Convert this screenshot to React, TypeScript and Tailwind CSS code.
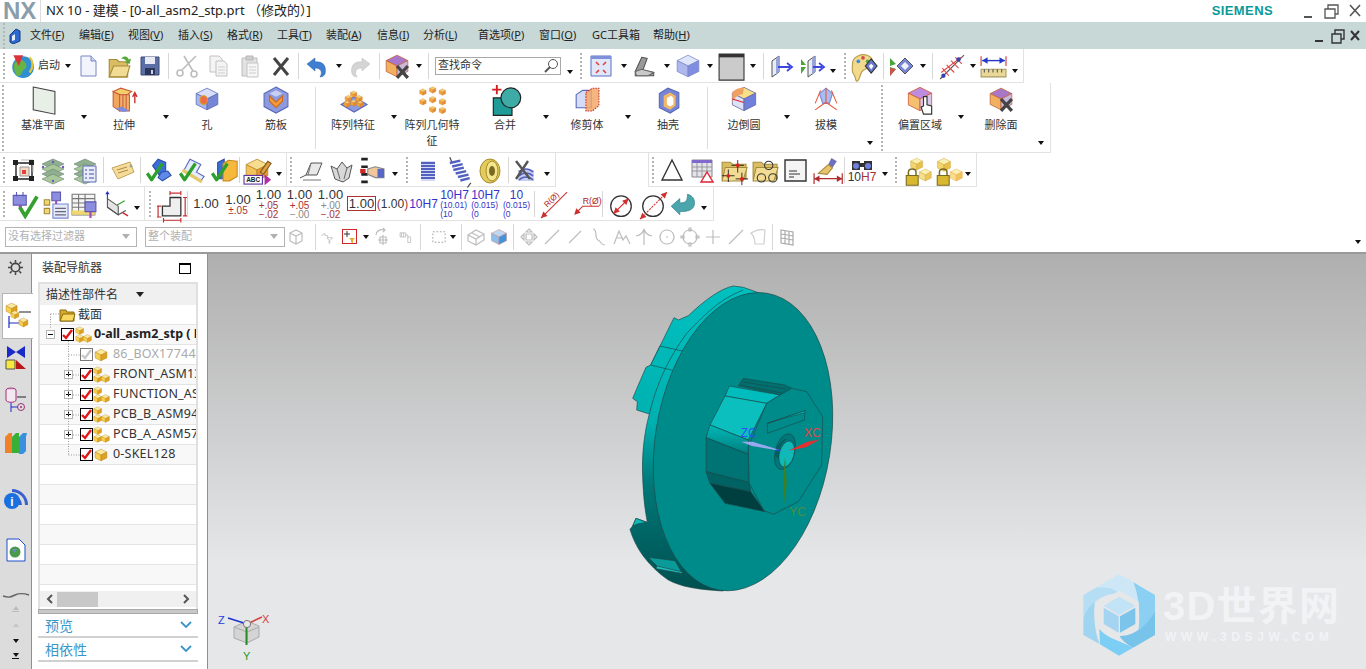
import React from "react";

const V = ({ s = 24, children }: { s?: number; children: React.ReactNode }) => (
  <svg width={s} height={s} viewBox="0 0 24 24" className="block shrink-0 overflow-visible">{children}</svg>
);
const CubeG = ({ t, l, r, k = "#555" }: { t: string; l: string; r: string; k?: string }) => (
  <g stroke={k} strokeWidth=".7" strokeLinejoin="round">
    <path d="M12 2l10 5-10 5L2 7z" fill={t} />
    <path d="M2 7l10 5v10L2 17z" fill={l} />
    <path d="M22 7l-10 5v10l10-5z" fill={r} />
  </g>
);
const Chk = () => <path d="M3 15l4 6 10-15" fill="none" stroke="#2ca02c" strokeWidth="3" strokeLinejoin="round" />;
const XMark = ({ c = "#444", w = 3 }: { c?: string; w?: number }) => <path d="M12 12l10 11M22 12L12 23" stroke={c} strokeWidth={w} />;

const Drop = () => <div className="w-0 h-0 border-x-[3.5px] border-x-transparent border-t-[4px] border-t-[#111]" />;
const S = ({ c, children }: { c: string; children?: React.ReactNode }) => (
  <div className={`${c} shrink-0 h-full flex items-center justify-center`}>{children}</div>
);
const Sep = ({ c }: { c: string }) => (
  <div className={`${c} shrink-0 h-full flex items-center justify-center`}><div className="w-px h-[26px] bg-[#d6d6d6]" /></div>
);
const Grip = ({ c = "w-[8px]" }: { c?: string }) => (
  <div className={`${c} shrink-0 h-full flex items-center justify-center`}>
    <div className="w-[2px] h-[26px] border-l-2 border-dotted border-[#b4b4b4]" />
  </div>
);

const Globe = () => (
  <V s={26}>
    <circle cx="13" cy="13" r="10" fill="#2f8fd0" />
    <path d="M6 8c4-3 9-1 10 3s-3 3-4 7-5 4-6 1-3-8 0-11z" fill="#66b544" />
    <path d="M19 4c3 3 4 9 0 14" stroke="#e2c23c" strokeWidth="2" fill="none" />
    <path d="M4 2h9l-4 10z" fill="#d9333c" />
  </V>
);
const Doc = () => (
  <V><path d="M5 2h10l5 5v15H5z" fill="#f2f4fb" stroke="#7b86c4" /><path d="M15 2v5h5" fill="#cdd3ee" stroke="#7b86c4" /></V>
);
const Folder = () => (
  <V s={26}>
    <path d="M3 6h7l2 2h8v14H3z" fill="#d9bd62" stroke="#a58a3a" />
    <path d="M3 22l4-10h15l-3 10z" fill="#f2dc94" stroke="#a58a3a" />
    <path d="M14 5c3-3 6-2 7 1l2-1-1 5-5-1 2-1c-1-2-3-3-5-3z" fill="#58a83c" />
  </V>
);
const Save = () => (
  <V><path d="M3 3h18v18H3z" fill="#5a6fa5" stroke="#3d4a75" /><path d="M7 3h10v7H7z" fill="#e8ebf5" /><path d="M7 14h10v7H7z" fill="#2b3557" /><path d="M13 16h2v4h-2z" fill="#cdd3ee" /></V>
);
const Sciss = () => (
  <V><g stroke="#bdbdbd" strokeWidth="1.6" fill="none"><path d="M21 2L7 16M9 2l9 15" /><circle cx="5" cy="19" r="3" /><circle cx="19" cy="20" r="3" /></g></V>
);
const Copy = () => (
  <V><g fill="#f4f4f4" stroke="#c2c2c2"><path d="M4 2h9l3 3v13H4z" /><path d="M10 7h8l3 3v12H10z" /></g><path d="M12 13h7M12 16h7M12 19h7" stroke="#cfcfcf" /></V>
);
const Paste = () => (
  <V><path d="M4 4h15v18H4z" fill="#e2e2e2" stroke="#bcbcbc" /><path d="M8 2h7v4H8z" fill="#cfcfcf" stroke="#b5b5b5" /><path d="M9 9h11v14H9z" fill="#f6f6f6" stroke="#c4c4c4" /><path d="M11 13h7M11 16h7M11 19h7" stroke="#cfcfcf" /></V>
);
const XI = () => <V><path d="M5 4l14 17M19 4L5 21" stroke="#444" strokeWidth="3" /></V>;
const Undo = ({ c = "#3f7fd1" }: { c?: string }) => (
  <V><path d="M2 10l8-6v4c7-1 12 3 10 12-1 2-3 3-5 3 3-5 1-9-5-9v3z" fill={c} stroke={c === "#3f7fd1" ? "#2a5ea8" : "#bdbdbd"} strokeWidth=".5" /></V>
);
const Redo = () => <div className="-scale-x-100"><Undo c="#d4d4d4" /></div>;
const CubeX = () => <V s={26}><CubeG t="#a877c9" l="#f0b060" r="#c9b8dc" k="#c0603a" /><XMark /></V>;
const Fit = () => (
  <V><path d="M2 2h20v20H2z" fill="#dfe7f8" stroke="#5b70c4" /><path d="M2 2h20v3H2z" fill="#7f8fd9" /><path d="M7 8l3 3M17 8l-3 3M7 19l3-3M17 19l-3-3" stroke="#e04040" strokeWidth="1.6" /></V>
);
const Iron = () => (
  <V s={26}><path d="M9 4l5 1-4 11 10 2v3H3v-4z" fill="#9a9a9a" stroke="#555" /><path d="M3 17l6-2 11 3-5 3H4z" fill="#c9c9c9" stroke="#666" /></V>
);
const BlueCube = () => <V s={26}><CubeG t="#dfe5fa" l="#aeb8ee" r="#7f8de0" k="#7c88c8" /></V>;
const GrayRect = () => <V s={26}><path d="M1 1h23v24H1z" fill="#cbcbcb" stroke="#333" /><path d="M1 1h23v3H1z" fill="#333" /></V>;
const PlaneA = ({ two }: { two?: boolean }) => (
  <V>
    {two && <path d="M0 5l5 6-5 0zM0 13h5l-5 7z" fill="#4ca33c" />}
    <path d={two ? "M7 7l7-5v16l-7 5z" : "M2 7l7-5v16l-7 5z"} fill="#e8ecf8" stroke="#555" />
    <path d={two ? "M11 5l3-3v16l-3 3z" : "M6 5l3-3v16l-3 3z"} fill="#9aa3d8" />
    <path d={two ? "M12 13h9M18 9l5 4-5 4" : "M8 13h12M17 9l5 4-5 4"} stroke="#3b46e0" strokeWidth="1.8" fill="none" />
  </V>
);
const Palette = () => (
  <V s={28}>
    <path d="M3 10c0-6 8-9 13-7s6 8 2 10-5 1-7 4-2 8-4 8-1-4-3-6-1-5-1-9z" fill="#f1d98e" stroke="#b99d4a" />
    <circle cx="8" cy="8" r="1.6" fill="#3a8de0" /><circle cx="12" cy="5" r="1.6" fill="#d94a4a" /><circle cx="16" cy="8" r="1.6" fill="#55a83a" />
    <path d="M14 12l5-6 5 6-5 6z" fill="#6a79d0" stroke="#333" /><path d="M17 12l2-2 2 2-2 3z" fill="#fff" />
  </V>
);
const Diamond = () => (
  <V>
    <path d="M0 4l6 6-6 2zM0 13l6 2-6 7z" fill="#4ca33c" /><path d="M0 14l6 1-6 7z" fill="#c9564a" />
    <path d="M7 12l8-8 8 8-8 8z" fill="#7785d5" stroke="#555" /><path d="M11 12l4-4 4 4-4 4z" fill="#eef0fb" />
  </V>
);
const Hatch = () => (
  <V s={26}>
    <path d="M2 24L24 2" stroke="#555" /><path d="M4 14l6 7M8 11l7 7M12 7l7 7M16 4l6 6M3 18l18-14" stroke="#e04545" strokeWidth="1" />
    <circle cx="5" cy="21" r="2" fill="#3344b0" /><circle cx="19" cy="6" r="2" fill="#3344b0" />
  </V>
);
const RulerI = () => (
  <V s={26}>
    <path d="M1 3v9M24 3v9" stroke="#c33" /><path d="M2 7h21" stroke="#2438c8" strokeWidth="1.3" /><path d="M2 7l5-3v6zM23 7l-5-3v6z" fill="#2438c8" />
    <path d="M1 15h23v7H1z" fill="#e9d898" stroke="#a79a60" /><path d="M4 15v3M8 15v3M12 15v3M16 15v3M20 15v3" stroke="#555" />
  </V>
);
const Plane = () => <V s={26}><path d="M3 1l20 4v21L3 22z" fill="#e8efe6" stroke="#444" /></V>;
const Extrude = () => (
  <V s={26}>
    <path d="M2 5l7-3 10 3-4 3-10 0z" fill="#f4d06c" stroke="#c95c38" /><path d="M2 5l6 3v15l-6-4z" fill="#f2a55c" stroke="#c95c38" /><path d="M8 8h9v15l-9 0z" fill="#f0b46e" stroke="#c95c38" /><path d="M11 8v15M14 8v15" stroke="#c95c38" /><path d="M4 21l6-2 7 4-6 1z" fill="#7c8de0" />
    <path d="M22 16V7M20 10l2-4 2 4" stroke="#c33" strokeWidth="1.3" fill="none" />
  </V>
);
const Hole = () => <V s={26}><CubeG t="#d8def8" l="#aab6ee" r="#7785d5" k="#5a68b8" /><ellipse cx="9" cy="13" rx="3.5" ry="4" fill="#f06a4a" stroke="#d4a020" /></V>;
const Rib = () => (
  <V s={26}><path d="M12 1l11 6v12l-11 6L1 19V7z" fill="#8d9ae0" stroke="#5a68b8" /><path d="M6 9l6 6 6-6v5l-6 6-6-6z" fill="#f49a3a" stroke="#c96a20" /><path d="M12 4l6 3-6 3-6-3z" fill="#c7cff2" /></V>
);
const SmallBox = ({ x, y, c = "#f2a53a" }: { x: number; y: number; c?: string }) => (
  <g transform={`translate(${x} ${y}) scale(.3)`}><CubeG t="#f7cc6c" l={c} r="#e88e2e" k="#c96a20" /></g>
);
const PatF = () => (
  <V s={26}><path d="M1 17l12-7 12 7-12 7z" fill="#8d9ae0" stroke="#5a68b8" /><SmallBox x={9} y={4} /><SmallBox x={4} y={8} /><SmallBox x={14} y={8} /><SmallBox x={9} y={12} /><SmallBox x={15} y={13} /><SmallBox x={3} y={13} /></V>
);
const PatG = () => (
  <V s={26}><SmallBox x={0} y={2} /><SmallBox x={9} y={0} /><SmallBox x={18} y={2} /><SmallBox x={0} y={11} /><SmallBox x={9} y={9} /><SmallBox x={18} y={11} /><SmallBox x={9} y={18} /><SmallBox x={18} y={19} /></V>
);
const Unite = () => (
  <V s={28}><path d="M2 11h16v15H2z" fill="#1f9c98" stroke="#222" /><circle cx="17" cy="11" r="8.5" fill="#3eaba6" stroke="#222" /><path d="M1 4h8M5 0v8" stroke="#d02020" strokeWidth="1.6" /></V>
);
const Trim = () => (
  <V s={26}><path d="M2 8l6-4h8v16H2z" fill="#d6dcf8" stroke="#5a68b8" /><path d="M11 6l6-4h6v16l-6 5h-6z" fill="#f2a868" fillOpacity=".85" stroke="#c33" strokeDasharray="1.5 1" /></V>
);
const Shell = () => (
  <V s={26}><path d="M4 7l8-5 10 4v14l-8 5-10-5z" fill="#7785d5" stroke="#5a68b8" /><path d="M8 9l6-3 5 3v9l-5 4-6-3z" fill="#f0b868" /><path d="M11 11l4-2 2 2v6l-3 2-3-2z" fill="#fff" /></V>
);
const Blend = () => (
  <V s={28}><CubeG t="#f6e08a" l="#dce3f8" r="#6f7fdc" k="#6a6a9a" /><path d="M2 7c0-3 8-5 10-5l-1 6c-3 0-7 2-9 7z" fill="#f0a060" /><path d="M2 12l10 3" stroke="#d23" /></V>
);
const Draft = () => (
  <V s={26}><path d="M12 2l6 5-3 9H9L6 7z" fill="#a9bdf0" stroke="#7785d5" /><path d="M12 2v13M12 15L2 22M12 15l10 7M7 4L2 16M17 4l5 12" stroke="#e8583a" fill="none" /></V>
);
const Offset = () => (
  <V s={28}><CubeG t="#bd8be0" l="#f4c070" r="#d9c8ea" k="#d05a38" /><path d="M15 10v8l-2 1 2 6h7v-7l-4-1v-7z" fill="#fff" stroke="#333" /></V>
);
const AsmNet = () => (
  <V s={24}><path d="M5 5h16v16H5z" fill="none" stroke="#222" strokeWidth="1.4" /><path d="M10 2h12v12" fill="none" stroke="#bbb" /><path d="M9 9h9v9H9z" fill="#f6d8c4" stroke="#999" /><path d="M11 12h4v4h-4z" fill="#e04040" /><g fill="#222"><rect x="2" y="2" width="5" height="5" /><rect x="18" y="2" width="5" height="5" /><rect x="2" y="18" width="5" height="5" /><rect x="18" y="18" width="5" height="5" /></g></V>
);
const Layer = ({ list }: { list?: boolean }) => (
  <V s={24}>
    {[2, 7, 12, 17].map((y, i) => (
      <path key={y} d={`M1 ${y + 4}l11-5 11 5-11 5z`} fill={i % 2 ? "#a8c89a" : "#8fb090"} stroke="#6a8070" strokeWidth=".6" />
    ))}
    {list && <g><path d="M10 8h13v16H10z" fill="#e8ecfa" stroke="#5a68b8" /><path d="M12 12h2M16 12h5M12 16h2M16 16h5M12 20h2M16 20h5" stroke="#4050a0" /></g>}
    {!list && <g fill="#6a5ac0"><circle cx="12" cy="4" r="1.2" /><circle cx="2" cy="9" r="1.2" /><circle cx="22" cy="9" r="1.2" /><circle cx="12" cy="23" r="1.2" /></g>}
  </V>
);
const Tag = () => (
  <V s={24}><path d="M2 10l18-6 4 10-16 7z" fill="#f5dc9a" stroke="#c2a55c" /><path d="M7 12l10-3M8 15l10-3" stroke="#b08a40" /><circle cx="21" cy="8" r="1" fill="#fff" stroke="#888" /></V>
);
const BluA = () => (
  <V s={26}><path d="M8 8l5-6 7 3v11l-5 2z" fill="#3b6ed8" stroke="#2a4ea8" /><path d="M16 14l6-1 3 4-8 5-4-3z" fill="#5f8ae8" stroke="#2a4ea8" /><Chk /></V>
);
const YelA = () => (
  <V s={26}><path d="M12 2l10 5-4 7 7 4-3 4-16-9z" fill="#e6ecfb" stroke="#5a68b8" /><path d="M5 12l18 11" stroke="#e4c96c" strokeWidth="3" /><Chk /></V>
);
const BluY = () => (
  <V s={26}><path d="M8 5l6-3v18H8z" fill="#3b6ed8" stroke="#2a4ea8" /><path d="M13 6l5-3 8 1v14l-7 4h-6z" fill="#f6b93b" stroke="#c98a20" /><Chk /></V>
);
const AbcI = () => (
  <V s={26}>
    <CubeG t="#f7dd90" l="#f2c35c" r="#e89a38" k="#b88020" />
    <path d="M15 14l7-10 3 2-7 10z" fill="#e2a040" stroke="#7a5a20" />
    <rect x="0" y="17" width="17" height="8" fill="#fff" stroke="#5a2ca0" />
    <text x="8.5" y="23.500" textAnchor="middle" fontSize="6" fontWeight="700" fill="#222" fontFamily="Liberation Sans">ABC</text>
    <path d="M19 16l6 5-6 5z" fill="#b030a0" />
  </V>
);
const Surf = () => (
  <V s={24}><path d="M1 20l6-3 5-12h11l-5 12H7" fill="#e8e8e8" stroke="#555" /><path d="M12 5l-3 12M4 22h18" stroke="#777" /></V>
);
const Surf2 = () => <V s={24}><path d="M2 8l6 3 5-7 5 6 5-3-3 13-6 4-8-3z" fill="#d8d8d8" stroke="#555" /><path d="M8 11l3 10M18 10l-3 11" stroke="#666" /></V>;
const Points = () => (
  <V s={26}><path d="M3 2h6M3 9h6M3 16h6M3 23h6" stroke="#222" strokeWidth="2.4" /><rect x="2" y="11" width="5" height="4" fill="#d02828" /><path d="M9 11l7-2 8 2v8h-8l-7-3z" fill="#f0c89c" stroke="#888" /><path d="M18 11h6v8h-6z" fill="#5866c8" /></V>
);
const Coil = () => (
  <V s={24}><path d="M5 3h14v20H5z" fill="#d6daf5" /><path d="M5 5h14M5 8h14M5 11h14M5 14h14M5 17h14M5 20h14" stroke="#5260c0" strokeWidth="1.8" /></V>
);
const Spring = () => (
  <V s={28}><path d="M5 1l2 5M20 27l3-4" stroke="#444" /><path d="M5 6l9-2M7 9l9-2M8 12l9-2M10 15l9-2M12 18l9-2M14 21l8-2" stroke="#5260c0" strokeWidth="2" /></V>
);
const Disc = () => (
  <V s={24}><ellipse cx="13" cy="13" rx="10" ry="12" fill="#e4cc5c" stroke="#a58a2a" /><ellipse cx="15" cy="13" rx="6" ry="10" fill="#f4e48c" stroke="#a58a2a" /><ellipse cx="15" cy="13" rx="3" ry="5" fill="#7a6a20" /></V>
);
const CoilX = () => (
  <V s={24}><path d="M6 12h16v11H6z" fill="#c8cef0" /><path d="M7 14c4-4 10-4 14 0M7 18c4-4 10-4 14 0M7 22c4-4 10-4 14 0" stroke="#5260c0" strokeWidth="1.6" fill="none" /><path d="M4 3l14 18M16 3L4 21" stroke="#555" strokeWidth="2.4" /></V>
);
const Tri = () => <V s={24}><path d="M12 2l10 20H2z" fill="none" stroke="#333" strokeWidth="1.4" /></V>;
const Table = () => (
  <V s={24}><path d="M2 2h20v17H2z" fill="#e4e4ec" stroke="#888" /><path d="M2 2h20v3H2z" fill="#8068cc" /><path d="M2 9h20M2 13h20M7 5v14M12 5v14M17 5v14" stroke="#999" /><path d="M17 14l6 10H11z" fill="#fff" stroke="#d23" strokeWidth="1.4" /></V>
);
const FolderPt = ({ rings }: { rings?: boolean }) => (
  <V s={25}>
    <path d="M2 5h8l2 2h13v14H2z" fill="#d9bd62" stroke="#a58a3a" /><path d="M2 23l3-13h21l-4 13z" fill="#f2dc94" stroke="#a58a3a" />
    {rings ? <g fill="none" stroke="#333"><circle cx="17" cy="8" r="4" /><circle cx="10" cy="20" r="4" /><circle cx="21" cy="20" r="4" /></g> :
      <g stroke="#111" fill="#e02020"><path d="M17 3v12M11 8h12M8 12v12M2 18h12M21 15v12M15 21h12" strokeWidth=".8" /><circle cx="17" cy="8" r="1.8" stroke="none" /><circle cx="8" cy="18" r="1.8" stroke="none" /><circle cx="21" cy="21" r="1.8" stroke="none" /></g>}
  </V>
);
const Note = () => (
  <V s={24}><path d="M2 2h21v21H2z" fill="#f4f4f4" stroke="#333" strokeWidth="1.4" /><path d="M6 13h8M6 16h11M6 19h5" stroke="#333" strokeWidth="1.1" /></V>
);
const Brush = () => (
  <V s={26}><path d="M17 1l5 3-4 6-4-3z" fill="#6f6fc0" /><path d="M14 7l4 3-5 6-8-1z" fill="#e8c46c" stroke="#a58a3a" /><path d="M1 15v10M27 15v10M1 20h26" stroke="#b02c2c" strokeWidth="1.1" /><path d="M1 20l5-3v6zM27 20l-5-3v6z" fill="#b02c2c" /></V>
);
const Lock = ({ shift }: { shift?: boolean }) => (
  <V s={26}>
    <g transform={shift ? "translate(2 0) scale(.6)" : "translate(6 0) scale(.55)"}><CubeG t="#faf0b0" l="#f3d56c" r="#e8c04c" k="#c8a030" /></g>
    <g transform="translate(14 10) scale(.55)"><CubeG t="#faf0b0" l="#f6e08c" r="#eec65c" k={shift ? "#f0963a" : "#c8a030"} /></g>
    <path d="M3 17h11v9H3z" fill="#d9b830" stroke="#7a6a20" /><path d="M5 17v-3c0-4 7-4 7 0v3" fill="none" stroke="#7a6a20" strokeWidth="1.4" />
  </V>
);
const PlugChk = () => (
  <V s={26}><path d="M6 1v4M12 1v4M3 4h12v9H3z" fill="#8d8de0" stroke="#5a5ab0" /><path d="M8 13h3v3H8z" fill="#a04ac0" /><path d="M9 15l5 8L25 5" fill="none" stroke="#35a02e" strokeWidth="3.4" /></V>
);
const PlugTree = () => (
  <V s={26}><path d="M3 8h5v5H3zM3 16h5v5H3z" fill="#f0d870" stroke="#a58a3a" /><path d="M11 12h14v13H11z" fill="#e4e8f8" stroke="#7785d5" /><path d="M13 16h10M13 19h10M13 22h10" stroke="#667" /><path d="M10 1h8v8h-8z" fill="#8d8de0" stroke="#5a5ab0" /><path d="M13 9h2v3h-2z" fill="#a04ac0" /></V>
);
const PlugTable = () => (
  <V s={26}><path d="M1 3h21v19H1z" fill="#f4f4f4" stroke="#777" /><path d="M1 7h21M1 11h21M1 15h21M7 3v19M13 3v19" stroke="#777" /><path d="M1 18h21v4H1z" fill="#f0d870" /><path d="M13 10h10v9H13z" fill="#8d8de0" stroke="#5a5ab0" /><path d="M17 19h2v6h-2z" fill="#a04ac0" /></V>
);
const Wcs = () => (
  <V s={26}><path d="M5 7l10 7v8L5 15z" fill="#e4e4e4" stroke="#555" /><path d="M5 15l10 7 7-4" fill="none" stroke="#555" /><path d="M5 7V1" stroke="#2230d0" /><path d="M3 3l2-3 2 3z" fill="#2230d0" /><path d="M14 13l7-4" stroke="#2c9a2c" /><path d="M19 20l5 3" stroke="#d02c2c" strokeWidth="1.4" /></V>
);
const Dim = () => (
  <V s={26}><path d="M5 23V14h7V6h10v17z" fill="#efefef" stroke="#333" strokeWidth="1.2" /><path d="M1 14v10M4 14H0M4 24H0M12 2h10M12 0v4M22 0v4M26 6v17M24 6h4M24 23h4M6 27h16M6 25v4M22 25v4" stroke="#c83030" strokeWidth="1.1" fill="none" /></V>
);
const RDim = ({ long }: { long?: boolean }) => (
  <V s={26}>
    {long ? <path d="M1 25L25 1" stroke="#c83030" /> : <path d="M3 21l7-7h15" stroke="#c83030" fill="none" />}
    <path d={long ? "M1 25l2-6 4 4z" : "M2 22l2-6 4 4z"} fill="#c83030" />
    <text x={long ? 6 : 10} y={long ? 14 : 12} fontSize={long ? 7.5 : 8} fill="#b02020" transform={long ? "rotate(-45 8 14)" : undefined} fontFamily="Liberation Sans">R(Ø)</text>
  </V>
);
const DiaDim = ({ out }: { out?: boolean }) => (
  <V s={26}>
    <circle cx="12" cy="14" r="9.5" fill="none" stroke="#333" strokeWidth="1.2" />
    {out ? <path d="M0 26L25 1" stroke="#d23030" strokeDasharray="2 1" /> : <path d="M5 21L19 7" stroke="#d23030" />}
    <path d={out ? "M0 26l2-6 4 4zM25 1l-2 6-4-4z" : "M5 21l2-6 4 4zM19 7l-2 6-4-4z"} fill="#d23030" />
  </V>
);
const Back = () => (
  <V s={26}><path d="M2 14l8-7v4c6 0 7-2 7-8 5 1 8 6 6 11-2 4-6 5-13 5v3z" fill="#4aa5ac" stroke="#2d7e86" strokeWidth=".6" /></V>
);
const Mini = ({ d, c = "#bdbdbd" }: { d: string; c?: string }) => (
  <svg width="20" height="20" viewBox="0 0 20 20" className="block"><path d={d} fill="none" stroke={c} strokeWidth="1.2" /></svg>
);
const Dim2 = ({ a, b }: { a: string; b?: string }) => (
  <div className="flex flex-col items-center font-['Liberation_Sans',sans-serif]">
    <span className="text-[13px] leading-[13px] text-[#333]">1.00</span>
    <span className="text-[10px] leading-[9px] text-[#a33]">{a}</span>
    {b && <span className="text-[10px] leading-[9px] text-[#a33]">{b}</span>}
  </div>
);
const Dim3 = ({ a, b, d }: { a: string; b: string; d?: boolean }) => (
  <div className="flex flex-col items-center font-['Liberation_Sans',sans-serif]">
    <span className="text-[13px] leading-[13px] text-[#333]">1.00</span>
    <span className={`text-[10px] leading-[9px] ${d ? "text-[#888]" : "text-[#a33]"}`}>{a}</span>
    <span className={`text-[10px] leading-[9px] ${d ? "text-[#a33]" : "text-[#888]"}`}>{b}</span>
  </div>
);
const Fit3 = ({ a, b, c }: { a: string; b: string; c: string }) => (
  <div className="flex flex-col items-center text-[#3434c8] font-['Liberation_Sans',sans-serif]">
    <span className="text-[12px] leading-[12px]">{a}</span>
    <span className="text-[8.5px] leading-[9px] self-start">{b}</span>
    <span className="text-[8.5px] leading-[8px] self-start">{c}</span>
  </div>
);

const RB = ({ c, icon, t }: { c: string; icon: React.ReactNode; t: string }) => (
  <div className={`${c} shrink-0 h-full flex flex-col items-center text-[11px] leading-[16px] text-[#333] text-center pt-[2px]`}>
    <div className="h-[28px] flex items-center justify-center">{icon}</div>
    <div className="mt-[4px]">{t}</div>
  </div>
);
const RDrop = ({ c }: { c: string }) => (
  <div className={`${c} shrink-0 h-full flex justify-center pt-[32px]`}><Drop /></div>
);
const Corner = ({ c }: { c: string }) => (
  <div className={`${c} shrink-0 h-full flex justify-end items-end pb-[7px] pr-[5px]`}><Drop /></div>
);
const RSep = ({ c }: { c: string }) => (
  <div className={`${c} shrink-0 h-full flex justify-center items-center`}><div className="w-px h-[62px] bg-[#dcdcdc]" /></div>
);

const Check = ({ off }: { off?: boolean }) => (
  <div className={`w-[13px] h-[13px] border bg-white shrink-0 flex items-center justify-center ${off ? "border-[#777]" : "border-black"}`}>
    <svg width="11" height="11" viewBox="0 0 11 11"><path d="M1 6l3 3 6-8" fill="none" stroke={off ? "#c8c8c8" : "#e01818"} strokeWidth="2.4" /></svg>
  </div>
);
const OneCube = () => (
  <svg width="14" height="14" viewBox="0 0 24 24" className="shrink-0"><CubeG t="#fbe9a0" l="#f6ce50" r="#e0a020" k="#a87a10" /></svg>
);
const Asm = () => (
  <svg width="17" height="17" viewBox="0 0 24 24" className="shrink-0">
    <g transform="translate(0 0) scale(.55)"><CubeG t="#fbe9a0" l="#f6ce50" r="#e0a020" k="#a87a10" /></g>
    <g transform="translate(0 11) scale(.55)"><CubeG t="#fbe9a0" l="#f6ce50" r="#e0a020" k="#a87a10" /></g>
    <g transform="translate(11 11) scale(.55)"><CubeG t="#fbe9a0" l="#f6ce50" r="#e0a020" k="#a87a10" /></g>
  </svg>
);
const Box = ({ m }: { m?: boolean }) => (
  <div className="w-[9px] h-[9px] border border-[#b5b5b5] bg-white relative shrink-0">
    <div className="absolute left-[1px] right-[1px] top-[3px] h-px bg-black" />
    {!m && <div className="absolute top-[1px] bottom-[1px] left-[3px] w-px bg-black" />}
  </div>
);
const Row = ({ alt, children }: { alt?: boolean; children?: React.ReactNode }) => (
  <div className={`h-[20px] shrink-0 border-b border-[#e4e4e4] flex items-center whitespace-nowrap overflow-hidden ${alt ? "bg-[#f8f8f8]" : "bg-white"}`}>{children}</div>
);
const Child = ({ n, alt, plus, asm, off }: { n: string; alt?: boolean; plus?: boolean; asm?: boolean; off?: boolean }) => (
  <Row alt={alt}>
    <div className="w-[33px] shrink-0 flex justify-end">{plus && <Box />}</div>
    <div className="w-[7px] shrink-0" />
    <Check off={off} />
    <div className="w-[16px] shrink-0 flex justify-center">{asm ? <Asm /> : <OneCube />}</div>
    <span className={`ml-[4px] text-[12.5px] tracking-[.2px] ${off ? "text-[#aaa]" : "text-[#333]"}`}>{n}</span>
  </Row>
);

const Menu = ({ c, k, t }: { c: string; k?: string; t: string }) => (
  <div className={`${c} shrink-0 whitespace-nowrap`}>{t}{k && <>(<span className="underline">{k}</span>)</>}</div>
);

export default function App() {
  return (
    <div className="w-[1366px] h-[669px] overflow-hidden bg-white flex flex-col font-['Noto_Sans','Noto_Sans_CJK_SC',sans-serif] text-[#333]">
      {/* title */}
      <div className="h-[22px] shrink-0 flex items-center relative">
        <div className="w-[41px] h-full shrink-0 border-r border-[#ddd] text-[#8a9dab] text-[24px] leading-[22px] font-bold pl-[3px] font-['Liberation_Sans',sans-serif]">NX</div>
        <div className="ml-[5px] text-[13px] text-[#222] whitespace-nowrap">NX 10 - 建模 - [0-all_asm2_stp.prt （修改的）]</div>
        <div className="flex-1" />
        <div className="text-[#0a9a9a] font-bold text-[13px] tracking-[.4px] font-['Liberation_Sans',sans-serif] mr-[24px]">SIEMENS</div>
        <svg width="68" height="18" viewBox="0 0 68 18" className="mr-[1px]">
          <path d="M7 15h8" stroke="#555" strokeWidth="2" />
          <path d="M28 7h10v9H28zM31 7V3h10v9h-3" fill="none" stroke="#555" strokeWidth="1.3" />
          <path d="M53 3l10 11M63 3L53 14" stroke="#555" strokeWidth="1.6" />
        </svg>
      </div>
      {/* menu */}
      <div className="h-[27px] shrink-0 bg-[#c8d8d7] flex items-center text-[11px] text-[#222]">
        <Grip c="w-[8px]" />
        <div className="w-[22px] shrink-0 flex items-center">
          <svg width="14" height="16" viewBox="0 0 14 16"><path d="M2 7l6-6 4 2v10l-7 3-3-2z" fill="#2a6ad0" stroke="#183c88" /><path d="M4 8l3-2v6l-3 1z" fill="#e4ecfb" /></svg>
        </div>
        <Menu c="w-[49px]" t="文件" k="F" />
        <Menu c="w-[49px]" t="编辑" k="E" />
        <Menu c="w-[50px]" t="视图" k="V" />
        <Menu c="w-[49px]" t="插入" k="S" />
        <Menu c="w-[50px]" t="格式" k="R" />
        <Menu c="w-[49px]" t="工具" k="T" />
        <Menu c="w-[51px]" t="装配" k="A" />
        <Menu c="w-[46px]" t="信息" k="I" />
        <Menu c="w-[55px]" t="分析" k="L" />
        <Menu c="w-[61px]" t="首选项" k="P" />
        <Menu c="w-[53px]" t="窗口" k="O" />
        <Menu c="w-[61px]" t="GC工具箱" />
        <Menu c="w-[60px]" t="帮助" k="H" />
        <div className="flex-1" />
        <svg width="58" height="16" viewBox="0 0 58 16" className="mr-[3px]">
          <path d="M10 13h8" stroke="#333" strokeWidth="2" />
          <path d="M27 6h9v9h-9zM30 6V2h9v9h-3" fill="none" stroke="#333" strokeWidth="1.4" />
          <path d="M46 3l8 9M54 3l-8 9" stroke="#333" strokeWidth="2" />
        </svg>
      </div>
      {/* row 1 */}
      <div className="h-[34px] shrink-0 flex">
        <div className="w-[1024px] h-full flex border-r border-b border-[#e2e2e2] overflow-visible">
          <Grip />
          <S c="w-[28px]"><Globe /></S>
          <S c="w-[26px]"><span className="text-[11px] whitespace-nowrap">启动</span></S>
          <S c="w-[12px]"><Drop /></S>
          <S c="w-[28px]"><Doc /></S>
          <S c="w-[34px]"><Folder /></S>
          <S c="w-[28px]"><Save /></S>
          <Sep c="w-[8px]" />
          <S c="w-[30px]"><Sciss /></S>
          <S c="w-[32px]"><Copy /></S>
          <S c="w-[32px]"><Paste /></S>
          <S c="w-[30px]"><XI /></S>
          <Sep c="w-[4px]" />
          <S c="w-[34px]"><Undo /></S>
          <S c="w-[10px]"><Drop /></S>
          <S c="w-[32px]"><Redo /></S>
          <Sep c="w-[6px]" />
          <S c="w-[30px]"><CubeX /></S>
          <S c="w-[14px]"><Drop /></S>
          <Sep c="w-[4px]" />
          <div className="w-[5px] shrink-0" />
          <div className="w-[126px] h-[18px] self-center shrink-0 border border-[#a8a8a8] bg-white flex items-center pl-[2px] text-[11px]">
            <span className="flex-1 whitespace-nowrap">查找命令</span>
            <svg width="16" height="16" viewBox="0 0 16 16" className="mr-[1px]"><circle cx="10" cy="6" r="4.5" fill="#fff" stroke="#555" /><path d="M7 9l-5 5" stroke="#555" strokeWidth="2" /></svg>
          </div>
          <S c="w-[17px]"><div className="mt-[12px]"><Drop /></div></S>
          <Grip c="w-[6px]" />
          <S c="w-[34px]"><Fit /></S>
          <S c="w-[12px]"><Drop /></S>
          <S c="w-[30px]"><Iron /></S>
          <S c="w-[14px]"><Drop /></S>
          <S c="w-[28px]"><BlueCube /></S>
          <S c="w-[16px]"><Drop /></S>
          <S c="w-[26px]"><GrayRect /></S>
          <S c="w-[18px]"><Drop /></S>
          <Sep c="w-[2px]" />
          <S c="w-[36px]"><PlaneA /></S>
          <S c="w-[25px]"><PlaneA two /></S>
          <S c="w-[16px]"><div className="mt-[10px]"><Drop /></div></S>
          <Grip c="w-[8px]" />
          <S c="w-[28px]"><Palette /></S>
          <Sep c="w-[12px]" />
          <S c="w-[26px]"><Diamond /></S>
          <S c="w-[16px]"><Drop /></S>
          <Sep c="w-[2px]" />
          <S c="w-[36px]"><Hatch /></S>
          <S c="w-[8px]"><Drop /></S>
          <S c="w-[32px]"><RulerI /></S>
          <S c="w-[12px]"><div className="mt-[10px]"><Drop /></div></S>
        </div>
      </div>
      {/* ribbon */}
      <div className="h-[70px] shrink-0 flex">
        <div className="w-[1051px] h-full flex border-r border-b border-[#e2e2e2]">
          <div className="w-[8px] shrink-0 h-full flex justify-center pt-[2px]"><div className="w-[2px] h-[66px] border-l-2 border-dotted border-[#b4b4b4] -ml-[2px]" /></div>
          <RB c="w-[70px]" icon={<Plane />} t="基准平面" />
          <RDrop c="w-[12px]" />
          <RB c="w-[68px]" icon={<Extrude />} t="拉伸" />
          <RDrop c="w-[16px]" />
          <RB c="w-[66px]" icon={<Hole />} t="孔" />
          <RB c="w-[72px]" icon={<Rib />} t="筋板" />
          <RSep c="w-[6px]" />
          <RB c="w-[70px]" icon={<PatF />} t="阵列特征" />
          <RDrop c="w-[12px]" />
          <RB c="w-[64px]" icon={<PatG />} t="阵列几何特征" />
          <div className="w-[6px] shrink-0" />
          <RB c="w-[70px]" icon={<Unite />} t="合并" />
          <RDrop c="w-[12px]" />
          <RB c="w-[70px]" icon={<Trim />} t="修剪体" />
          <RDrop c="w-[12px]" />
          <RB c="w-[68px]" icon={<Shell />} t="抽壳" />
          <RSep c="w-[10px]" />
          <RB c="w-[64px]" icon={<Blend />} t="边倒圆" />
          <RDrop c="w-[22px]" />
          <RB c="w-[56px]" icon={<Draft />} t="拔模" />
          <Corner c="w-[24px]" />
          <div className="w-[8px] shrink-0 h-full flex justify-center pt-[2px]"><div className="w-[2px] h-[66px] border-l-2 border-dotted border-[#b4b4b4]" /></div>
          <RB c="w-[68px]" icon={<Offset />} t="偏置区域" />
          <RDrop c="w-[14px]" />
          <RB c="w-[66px]" icon={<CubeX />} t="删除面" />
          <Corner c="w-[15px]" />
        </div>
      </div>
      {/* row 3 */}
      <div className="h-[34px] shrink-0 flex">
        <div className="h-full flex border-b border-[#e2e2e2] w-[556px] border-r">
          <Grip />
          <S c="w-[29px]"><AsmNet /></S>
          <S c="w-[32px]"><Layer /></S>
          <S c="w-[32px]"><Layer list /></S>
          <Sep c="w-[4px]" />
          <S c="w-[34px]"><Tag /></S>
          <Sep c="w-[2px]" />
          <S c="w-[32px]"><BluA /></S>
          <S c="w-[33px]"><YelA /></S>
          <S c="w-[32px]"><BluY /></S>
          <Sep c="w-[2px]" />
          <S c="w-[34px]"><AbcI /></S>
          <S c="w-[10px]"><div className="mt-[8px]"><Drop /></div></S>
          <div className="w-[3px] shrink-0 border-r border-[#e2e2e2]" />
          <Grip />
          <S c="w-[32px]"><Surf /></S>
          <S c="w-[28px]"><Surf2 /></S>
          <S c="w-[32px]"><Points /></S>
          <S c="w-[16px]"><div className="mt-[8px]"><Drop /></div></S>
          <Grip c="w-[7px]" />
          <S c="w-[36px]"><Coil /></S>
          <S c="w-[24px]"><Spring /></S>
          <S c="w-[38px]"><Disc /></S>
          <Sep c="w-[1px]" />
          <S c="w-[30px]"><CoilX /></S>
          <S c="w-[15px]"><div className="mt-[8px]"><Drop /></div></S>
        </div>
        <div className="w-[92px] shrink-0" />
        <div className="h-full flex border-b border-r border-l border-[#e2e2e2] w-[329px]">
          <Grip c="w-[7px]" />
          <S c="w-[31px]"><Tri /></S>
          <S c="w-[30px]"><Table /></S>
          <S c="w-[30px]"><FolderPt /></S>
          <S c="w-[32px]"><FolderPt rings /></S>
          <S c="w-[32px]"><Note /></S>
          <S c="w-[30px]"><Brush /></S>
          <Sep c="w-[6px]" />
          <S c="w-[30px]">
            <div className="flex flex-col items-center">
              <svg width="24" height="14" viewBox="0 0 24 14"><g fill="#333"><path d="M2 4h8v9H2zM14 4h8v9h-8zM9 6h6v4H9z" /></g><circle cx="6" cy="9" r="3" fill="#6f7fdc" /><circle cx="18" cy="9" r="3" fill="#6f7fdc" /></svg>
              <span className="text-[12px] leading-[12px] font-['Liberation_Sans',sans-serif]">10<span className="text-[#a33]">H7</span></span>
            </div>
          </S>
          <S c="w-[15px]"><div className="mt-[8px]"><Drop /></div></S>
          <Grip />
          <S c="w-[32px]"><Lock /></S>
          <S c="w-[30px]"><Lock shift /></S>
          <S c="w-[12px]"><div className="mt-[8px]"><Drop /></div></S>
        </div>
      </div>
      {/* row 4 */}
      <div className="h-[34px] shrink-0 flex">
        <div className="w-[714px] h-full flex border-r border-b border-[#e2e2e2]">
          <Grip />
          <S c="w-[30px]"><PlugChk /></S>
          <S c="w-[31px]"><PlugTree /></S>
          <S c="w-[30px]"><PlugTable /></S>
          <S c="w-[31px]"><Wcs /></S>
          <S c="w-[14px]"><div className="mt-[8px]"><Drop /></div></S>
          <div className="w-px shrink-0 bg-[#e2e2e2]" />
          <Grip c="w-[10px]" />
          <S c="w-[30px]"><Dim /></S>
          <Sep c="w-[4px]" />
          <S c="w-[34px]"><span className="text-[13px] font-['Liberation_Sans',sans-serif]">1.00</span></S>
          <S c="w-[30px]"><Dim2 a="±.05" /></S>
          <S c="w-[31px]"><Dim2 a="+.05" b="−.02" /></S>
          <S c="w-[31px]"><Dim3 a="+.05" b="−.00" /></S>
          <S c="w-[31px]"><Dim3 a="+.00" b="−.02" d /></S>
          <S c="w-[31px]"><span className="border border-[#a33] px-[1px] text-[13px] leading-[13px] font-['Liberation_Sans',sans-serif]">1.00</span></S>
          <S c="w-[31px]"><span className="text-[12px] whitespace-nowrap font-['Liberation_Sans',sans-serif]"><span className="text-[#a33]">(</span>1.00<span className="text-[#a33]">)</span></span></S>
          <S c="w-[31px]"><span className="text-[12px] text-[#3434c8] font-['Liberation_Sans',sans-serif]">10H7</span></S>
          <S c="w-[31px]"><Fit3 a="10H7" b="(10.01)" c="(10" /></S>
          <S c="w-[31px]"><Fit3 a="10H7" b="(0.015)" c="(0" /></S>
          <S c="w-[31px]"><Fit3 a="10" b="(0.015)" c="(0" /></S>
          <Sep c="w-[4px]" />
          <S c="w-[34px]"><RDim long /></S>
          <S c="w-[30px]"><RDim /></S>
          <Sep c="w-[4px]" />
          <S c="w-[34px]"><DiaDim /></S>
          <S c="w-[29px]"><DiaDim out /></S>
          <S c="w-[30px]"><Back /></S>
          <S c="w-[14px]"><div className="mt-[8px]"><Drop /></div></S>
        </div>
      </div>
      {/* row 5 */}
      <div className="h-[31px] shrink-0 flex items-center">
        <div className="w-[5px] shrink-0" />
        <div className="w-[132px] h-[20px] shrink-0 border border-[#b4b4b4] flex items-center pl-[2px] pr-[6px] text-[11px] text-[#b0b0b0] bg-white">
          <span className="flex-1 whitespace-nowrap">没有选择过滤器</span>
          <div className="w-0 h-0 border-x-[4px] border-x-transparent border-t-[5px] border-t-[#b0b0b0]" />
        </div>
        <div className="w-[8px] shrink-0" />
        <div className="w-[140px] h-[20px] shrink-0 border border-[#b4b4b4] flex items-center pl-[2px] pr-[6px] text-[11px] text-[#b0b0b0] bg-white">
          <span className="flex-1 whitespace-nowrap">整个装配</span>
          <div className="w-0 h-0 border-x-[4px] border-x-transparent border-t-[5px] border-t-[#b0b0b0]" />
        </div>
        <S c="w-[25px]"><Mini d="M2 6l6-3 6 3v8l-6 3-6-3zM2 6l6 3 6-3M8 9v8" /></S>
        <Sep c="w-[10px]" />
        <S c="w-[14px]"><Mini d="M2 8l5-3v3h4v3M10 11h8l-4 4v4l-1 0v-4z" /></S>
        <S c="w-[30px]">
          <div className="w-[15px] h-[15px] border border-[#d02828] flex items-center justify-center">
            <svg width="13" height="13" viewBox="0 0 13 13"><path d="M4 1v6M1 4h6" stroke="#333" /><path d="M6 8h6l-2 2v3l-2-1v-2z" fill="#e8a820" /></svg>
          </div>
        </S>
        <S c="w-[4px]"><Drop /></S>
        <S c="w-[30px]"><Mini d="M3 8c0-4 4-6 8-5M10 1l2 2-2 2M10 8v10M5 13h10M7 10h6v6H7z" /></S>
        <S c="w-[14px]"><Mini d="M3 4h8v6H3zM11 7h3v11h4V10h-4M5 4v6M8 4v6" /></S>
        <Sep c="w-[16px]" />
        <S c="w-[18px]">
          <svg width="16" height="16" viewBox="0 0 16 16" className="ml-[4px]"><path d="M1 2h14v12H1z" fill="none" stroke="#999" strokeDasharray="2 2" /></svg>
        </S>
        <S c="w-[14px]"><Drop /></S>
        <Sep c="w-[2px]" />
        <S c="w-[28px]"><Mini d="M2 8l8-5 8 4v6l-8 5-8-4zM2 8l8 4 8-5M10 12v6M6 6l8 4" /></S>
        <S c="w-[18px]">
          <svg width="18" height="18" viewBox="0 0 24 24"><CubeG t="#bcd8f2" l="#8cc0ec" r="#3f94dc" k="#d08a8a" /></svg>
        </S>
        <Sep c="w-[10px]" />
        <S c="w-[22px]"><Mini d="M10 2l3 3h-6zM10 18l3-3H7zM2 10l3-3v6zM18 10l-3-3v6zM7 7h6v6H7z" /></S>
        <S c="w-[23px]"><Mini d="M4 16L16 4M3 17l2-2M15 5l2-2" /></S>
        <S c="w-[23px]"><Mini d="M4 16L16 4M9 11l2-2" /></S>
        <S c="w-[24px]"><Mini d="M5 2c5 0 1 9 5 11s2 5 7 5" /></S>
        <S c="w-[23px]"><Mini d="M2 17l5-13 4 9 3-4 4 8M5 11h6" /></S>
        <S c="w-[22px]"><Mini d="M2 9c5-1 7-3 8-7 1 4 3 6 8 7M10 2v16" /></S>
        <S c="w-[23px]"><Mini d="M10 3a7 7 0 1 0 .01 0zM9 10h2" /></S>
        <S c="w-[23px]"><Mini d="M10 3a7 7 0 1 0 .01 0zM9 1h2v3H9zM9 16h2v3H9zM1 9h3v2H1zM16 9h3v2h-3z" /></S>
        <S c="w-[23px]"><Mini d="M10 3v14M3 10h14" /></S>
        <S c="w-[23px]"><Mini d="M3 17L17 3M9 11l2-2" /></S>
        <S c="w-[22px]"><Mini d="M3 6c5-3 10-4 14-3l-1 14H7c0-5-1-8-4-11z" c="#cfcfcf" /></S>
        <Sep c="w-[6px]" />
        <S c="w-[24px]"><Mini d="M4 3l12 2v13L4 16zM4 7l12 2M4 11l12 2M8 4v13M12 4v13" c="#aaa" /></S>
        <div className="flex-1" />
        <div className="mr-[5px] mt-[10px]"><Drop /></div>
      </div>

      {/* main */}
      <div className="flex-1 min-h-0 flex border-t-2 border-[#9a9a9a]">
        {/* rail */}
        <div className="w-[32px] shrink-0 h-full bg-[#dcdcdc] border-r border-[#8f8f8f] flex flex-col items-center relative">
          <div className="h-[25px] flex items-center shrink-0 mt-[1px]">
            <svg width="15" height="15" viewBox="0 0 16 16"><circle cx="8" cy="8" r="4.5" fill="none" stroke="#444" strokeWidth="1.8" /><path d="M8 0v3M8 13v3M0 8h3M13 8h3M2 2l2 2M12 12l2 2M14 2l-2 2M2 14l2-2" stroke="#444" strokeWidth="1.6" /></svg>
          </div>
          <div className="h-[13px] shrink-0" />
          <div className="h-[46px] w-[31px] -mr-px ml-[2px] bg-white border border-r-0 border-[#b4b4b4] flex items-center justify-center shrink-0 z-10">
            <svg width="26" height="28" viewBox="0 0 26 28">
              <g transform="translate(0 0) scale(.55)"><CubeG t="#fbe9a0" l="#f6ce50" r="#e0a020" k="#a87a10" /></g>
              <g transform="translate(5 8) scale(.4)"><CubeG t="#fbe9a0" l="#f6ce50" r="#e0a020" k="#a87a10" /></g>
              <path d="M14 10h12" stroke="#222" /><path d="M4 14v12M4 21h10" stroke="#1a2ac8" strokeWidth="1.2" />
              <g transform="translate(13 15) scale(.45)"><CubeG t="#fbe9a0" l="#f6ce50" r="#e0a020" k="#a87a10" /></g>
            </svg>
          </div>
          <div className="h-[31px] shrink-0 flex items-end">
            <svg width="22" height="24" viewBox="0 0 22 24"><path d="M2 0l9 6 9-6v12l-9-6-9 6z" fill="#1a2ac8" /><path d="M1 14h9v9H1z" fill="#f6e83c" stroke="#555" /><path d="M11 14l10 9H11z" fill="#b81818" /></svg>
          </div>
          <div className="h-[43px] shrink-0 flex items-end">
            <svg width="22" height="26" viewBox="0 0 22 26"><ellipse cx="6" cy="3" rx="5" ry="2" fill="#e8c8e0" stroke="#a0307a" /><path d="M1 3v10c0 3 10 3 10 0V3" fill="#f4e8f0" stroke="#a0307a" /><path d="M12 10h9" stroke="#222" /><path d="M6 16v9M6 20h7" stroke="#1a2ac8" /><circle cx="16" cy="20" r="3.5" fill="none" stroke="#a0307a" /><circle cx="16" cy="20" r="1" fill="#a0307a" /></svg>
          </div>
          <div className="h-[42px] shrink-0 flex items-end">
            <svg width="24" height="24" viewBox="0 0 24 24"><path d="M1 6l4-4h3v20H1z" fill="#f0802a" /><path d="M8 6l4-4h3v20H8z" fill="#38b038" /><path d="M15 6l4-4h4l-1 4v14l-3 3h-4z" fill="#3a90e0" /></svg>
          </div>
          <div className="h-[55px] shrink-0 flex items-end">
            <svg width="26" height="26" viewBox="0 0 26 26"><path d="M9 5a16 16 0 0 1 16 16h-3A13 13 0 0 0 9 8zM9 11a10 10 0 0 1 10 10h-3a7 7 0 0 0-7-7z" fill="#3a60d0" /><circle cx="9" cy="17" r="8" fill="#1a70e0" /><text x="9" y="21.500" textAnchor="middle" fontSize="12" fontWeight="700" fill="#fff" fontFamily="Liberation Sans">i</text></svg>
          </div>
          <div className="h-[52px] shrink-0 flex items-end">
            <svg width="20" height="24" viewBox="0 0 20 24"><path d="M1 1h12l6 6v16H1z" fill="#fff" stroke="#1a50c8" /><circle cx="9" cy="14" r="5.5" fill="#4a9a4a" /><path d="M6 11h5l-2 4z" fill="#6a8ac8" /></svg>
          </div>
          <div className="h-[38px] shrink-0 flex items-end">
            <svg width="28" height="8" viewBox="0 0 28 8"><path d="M1 4c6 2 8 1 12-1s8-2 14 0" fill="none" stroke="#666" strokeWidth="1.4" /></svg>
          </div>
          <div className="h-[13px] shrink-0 flex flex-col justify-end items-center pb-[1px]"><div className="w-0 h-0 border-x-[3.5px] border-x-transparent border-b-[4px] border-b-[#bbb]" /><div className="w-[7px] h-px bg-[#bbb] mt-[1px]" /></div>
          <div className="h-[15px] shrink-0 flex items-end pb-[1px]"><div className="w-0 h-0 border-x-[3px] border-x-transparent border-b-[4px] border-b-[#c4c4c4]" /></div>
          <div className="h-[16px] shrink-0 flex items-end pb-[1px]"><Drop /></div>
          <div className="h-[16px] shrink-0 flex flex-col justify-end items-center pb-[1px]"><Drop /><div className="w-[7px] h-px bg-[#111] mt-[1px]" /></div>
        </div>
        {/* panel */}
        <div className="w-[176px] shrink-0 h-full bg-white border-r border-[#8f8f8f] flex flex-col pl-[6px] pr-[9px]">
          <div className="h-[28px] shrink-0 flex items-center pl-[4px] pr-[7px] text-[12px]">
            <span className="flex-1">装配导航器</span>
            <div className="w-[12px] h-[11px] border border-black border-t-2" />
          </div>
          <div className="h-[327px] shrink-0 border-2 border-b-0 border-[#e0e0e0] flex flex-col overflow-hidden relative">
            <div className="h-[21px] shrink-0 bg-[#f0f0f0] flex items-center pl-[6px] text-[12px]">
              <span>描述性部件名</span>
              <div className="ml-[18px] w-0 h-0 border-x-[4px] border-x-transparent border-t-[5px] border-t-[#222]" />
            </div>
            <div className="flex flex-col flex-1 relative">
              <Row>
                <div className="w-[19px] shrink-0" />
                <svg width="17" height="14" viewBox="0 0 17 14" className="shrink-0"><path d="M1 2h6l1 2h7v9H1z" fill="#d8a828" stroke="#8a6a10" /><path d="M1 13l3-7h12l-2 7z" fill="#f8d860" stroke="#8a6a10" /></svg>
                <span className="ml-[2px] text-[12px]">截面</span>
              </Row>
              <Row alt>
                <div className="w-[6px] shrink-0" />
                <Box m />
                <div className="w-[6px] shrink-0" />
                <Check />
                <div className="w-[1px] shrink-0" />
                <Asm />
                <span className="ml-[2px] text-[12.5px] font-bold text-[#222]">0-all_asm2_stp ( D</span>
              </Row>
              <Child n="86_BOX177447" off />
              <Child n="FRONT_ASM1350" alt plus asm />
              <Child n="FUNCTION_ASM" plus asm />
              <Child n="PCB_B_ASM9450" alt plus asm />
              <Child n="PCB_A_ASM5750" plus asm />
              <Child n="0-SKEL128" alt />
              <Row /><Row alt /><Row /><Row alt /><Row /><Row alt />
              <svg className="absolute left-0 top-0 pointer-events-none" width="60" height="160" viewBox="0 0 60 160">
                <path d="M10.5 9V24M10.5 9H19M28.5 36V150M28.500 50H40M33 70H40M33 90H40M33 110H40M33 130H40M28.500 150H40" fill="none" stroke="#9a9a9a" strokeDasharray="1 1.5" />
              </svg>
            </div>
          </div>
          <div className="h-[16px] -mt-[18px] mb-[2px] z-10 shrink-0 mx-[2px] bg-[#f0f0f0] flex items-center relative">
            <svg width="10" height="10" viewBox="0 0 10 10" className="ml-[5px]"><path d="M7 1L3 5l4 4" fill="none" stroke="#555" strokeWidth="2" /></svg>
            <div className="ml-[2px] w-[41px] h-[15px] bg-[#c8c8c8]" />
            <div className="flex-1" />
            <svg width="10" height="10" viewBox="0 0 10 10" className="mr-[5px]"><path d="M3 1l4 4-4 4" fill="none" stroke="#555" strokeWidth="2" /></svg>
          </div>
          <div className="h-[5px] shrink-0 bg-[#c8c8c8] border border-[#a8a8a8]" />
          <div className="flex-1" />
          <div className="h-[24px] shrink-0 border-b-2 border-[#d0d0d0] flex items-center pl-[7px] pr-[6px] text-[14px] text-[#3b96c8]">
            <span className="flex-1">预览</span>
            <svg width="12" height="8" viewBox="0 0 12 8"><path d="M1 1l5 5 5-5" fill="none" stroke="#3b96c8" strokeWidth="1.8" /></svg>
          </div>
          <div className="h-[24px] shrink-0 border-b-2 border-[#d0d0d0] flex items-center pl-[7px] pr-[6px] text-[14px] text-[#3b96c8] mb-[7px]">
            <span className="flex-1">相依性</span>
            <svg width="12" height="8" viewBox="0 0 12 8"><path d="M1 1l5 5 5-5" fill="none" stroke="#3b96c8" strokeWidth="1.8" /></svg>
          </div>
        </div>
        {/* viewport */}
        <div className="flex-1 min-w-0 h-full relative bg-[linear-gradient(180deg,#afafaf_0%,#e6e7e9_75%,#e6e7e9_100%)]">
          <svg className="absolute inset-0" width="1158" height="415" viewBox="208 254 1158 415">
            <defs>
              <linearGradient id="rim" x1="0" y1="0" x2="0" y2="1">
                <stop offset="0" stopColor="#00c0c0" /><stop offset=".45" stopColor="#00b0b0" /><stop offset=".65" stopColor="#007878" /><stop offset="1" stopColor="#004f4f" />
              </linearGradient>
              <linearGradient id="fac" x1="0" y1="0" x2="0" y2="1"><stop offset="0" stopColor="#00b8b8" /><stop offset="1" stopColor="#007e7e" /></linearGradient>
            </defs>
            <g transform="translate(610 270) scale(.33333)" stroke="#1c4a4a" strokeWidth="2" strokeLinejoin="round">
              <path d="M445 68L400 52L370 48C335 55 290 85 235 137L205 150L192 143L150 228L122 285L108 292L85 345L68 385L82 395L80 420L118 432C102 490 95 560 98 620C100 680 105 720 112 757L78 745L68 768L60 778C75 830 110 885 175 930C210 948 250 958 340 963L400 500Z" fill="url(#rim)" />
              <path d="M150 228l80 18-30 58-78-19z" fill="#00b8b8" />
              <path d="M118 432C140 340 175 265 230 190C270 150 320 90 400 60" fill="none" />
              <path d="M78 745l32 12-28 5-14 6z" fill="#10b8b8" />
              <path d="M115 862l80 10 20 35-70-15z" fill="#0a9a9a" />
              <path d="M140 888l78 18-4 4-76-14z" fill="#20c0c0" />
              <ellipse cx="399" cy="515" rx="263" ry="451" transform="rotate(9 399 515)" fill="#008b8b" />
              <path d="M400 325l125 20 20 10-35 20-125-28z" fill="#006f6f" />
              <path d="M395 335l130 22M390 345l125 24" fill="none" />
              <path d="M358 348l152 27-40 25-125-22z" fill="#00bcbc" />
              <path d="M345 378l125 22-55 110-115-45z" fill="#0bbfbf" />
              <path d="M300 465l115 45v43L288 503z" fill="url(#fac)" />
              <path d="M288 503l127 50v84l-127-32z" fill="#007474" />
              <path d="M288 605l130 32 4 28-122-25z" fill="#006262" />
              <path d="M300 640l122 25 43 60-120-25z" fill="#003f40" />
              <path d="M415 530l55-130 40-25 35-20 45 10 48 75-3 145-70 110-75 38-28-11-44-82z" fill="#008b8b" />
              <path d="M472 460l113-38-2 28-111 40z" fill="#008b8b" />
              <path d="M472 460l113-38v6l-65 17z" fill="#00c0c0" />
              <ellipse cx="525" cy="545" rx="29" ry="55" transform="rotate(15 525 545)" fill="#00777a" />
              <ellipse cx="530" cy="552" rx="22" ry="40" transform="rotate(15 530 552)" fill="#10b8b8" />
              <path d="M495 560c0-30 20-55 40-55-20 10-30 30-28 60z" fill="#006060" stroke="none" />
              <g stroke="none">
                <path d="M393 515l35 0 72 22 16 6-90-15z" fill="#9aa8f0" />
                <path d="M500 537l16 6-18-1z" fill="#2340e0" />
                <path d="M535 542l55-26 40-8-42 24z" fill="#e43030" />
                <path d="M525 560l5 75-5 70-6-70z" fill="#3f7f1f" />
              </g>
              <g stroke="none" fontSize="36" fontFamily="Liberation Sans">
                <text x="392" y="502" fill="#2a50f0">ZC</text>
                <text x="582" y="500" fill="#e24444">XC</text>
                <text x="538" y="738" fill="#4a8f44">YC</text>
              </g>
            </g>
            {/* triad */}
            <g>
              <path d="M234 627l13-6 12 5v11l-12 6-13-5z" fill="#c8c8c8" fillOpacity=".6" stroke="#aaa" />
              <path d="M234 627l13 5 12-5M247 632v11" fill="none" stroke="#aaa" />
              <path d="M247 624l-19-6" stroke="#2030d0" strokeWidth="1.6" /><path d="M247 624l15-7" stroke="#d84040" strokeWidth="1.6" /><path d="M246.500 624v21" stroke="#2a8a2a" strokeWidth="2" />
              <circle cx="247" cy="624" r="3.6" fill="#e8e8e8" stroke="#777" />
              <g fontSize="11" fontFamily="Liberation Sans">
                <text x="218" y="624" fill="#2040e0">Z</text><text x="262" y="623" fill="#d84040">X</text><text x="243" y="660" fill="#2a9a2a">Y</text>
              </g>
            </g>
            {/* watermark logo */}
            <g transform="translate(1060 560) scale(.33333)">
              <path d="M177 42l43 25c15 30 18 55 12 85-30-45-70-65-122-70z" fill="#cde7f6" />
              <path d="M220 67l65 38v45c-10 25-30 50-50 65 5-35 5-100-15-148z" fill="#8bd0f3" />
              <path d="M285 150v75l-66 38c-20-10-40-30-40-35 50 0 90-40 106-78z" fill="#77c3ea" />
              <path d="M219 263l-42 24-57-34-2-46c25 30 75 40 101 56z" fill="#7ccef5" />
              <path d="M120 253l-50-28v-50c10-40 30-60 40-70-15 40-5 120 10 148z" fill="#9fd5f1" />
              <path d="M70 175v-70l40-23c40-3 60 10 70 20-50-5-95 30-110 73z" fill="#b5ddf4" />
              <path d="M178 92l58 33v72l-58 33-58-33v-72z" fill="#e6e7e9" />
              <path d="M178 110l48 27-48 28-47-28z" fill="#c2e2f5" />
              <path d="M131 143l45 26v49l-45-26z" fill="#a3d4f2" />
              <path d="M226 143l-46 26v49l46-26z" fill="#7dc4ea" />
            </g>
          </svg>
          <div className="absolute left-[955px] top-[329px] text-[40px] leading-[46px] tracking-[1.2px] font-bold text-[#f2f3f5] whitespace-nowrap font-['Liberation_Sans','Noto_Sans_CJK_SC',sans-serif]">3D世界网</div>
          <div className="absolute left-[957px] top-[376px] text-[12px] leading-[14px] font-bold tracking-[4.6px] text-[#f2f3f5] whitespace-nowrap font-['Liberation_Sans',sans-serif]">WWW.3DSJW.COM</div>
        </div>
      </div>
    </div>
  );
}
